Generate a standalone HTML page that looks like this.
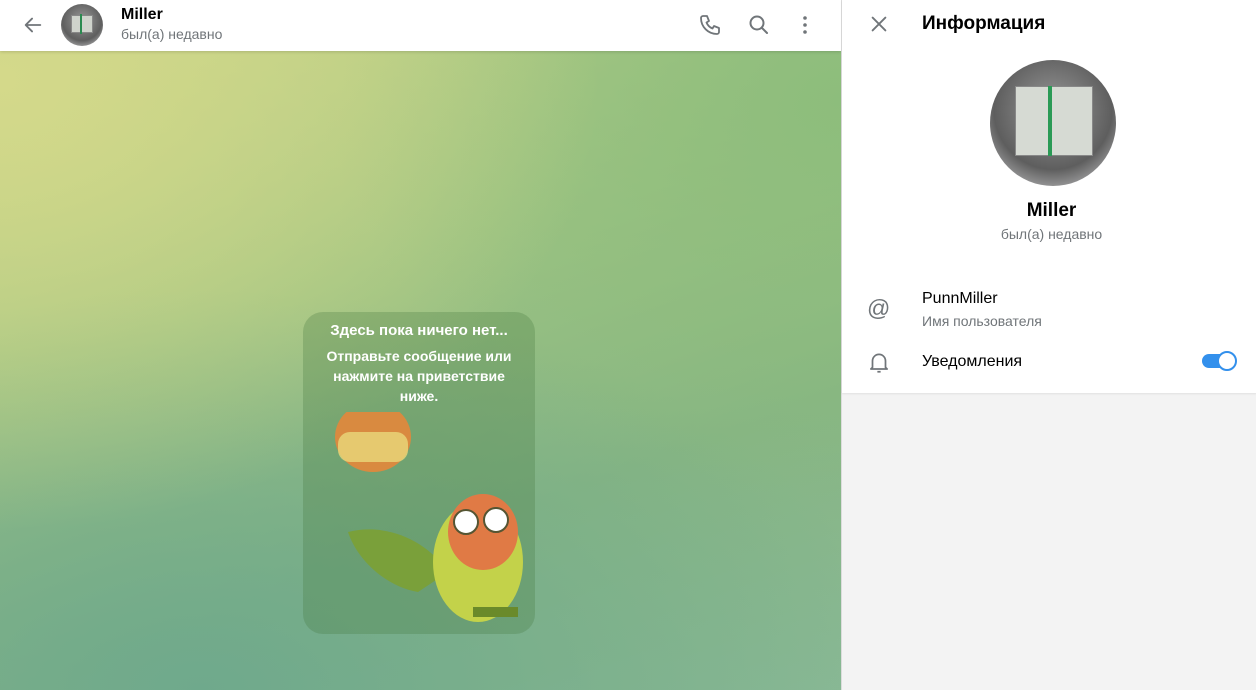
<!DOCTYPE html>
<html><head><meta charset="utf-8"><style>
*{margin:0;padding:0;box-sizing:border-box}
body{width:1256px;height:690px;overflow:hidden;font-family:"Liberation Sans","Noto Sans CJK SC",sans-serif;position:relative;background:#fff}
#chat{position:absolute;left:0;top:0;width:841px;height:690px;overflow:hidden;
background:radial-gradient(ellipse 600px 450px at 0 80px,#d4d98a 0%,rgba(212,217,138,0) 100%),
radial-gradient(ellipse 500px 400px at 841px 100px,#8dbd7c 0%,rgba(141,189,124,0) 100%),
radial-gradient(ellipse 700px 400px at 200px 690px,#6fa98c 0%,rgba(111,169,140,0) 100%),
linear-gradient(160deg,#c9d487 0%,#9fc483 40%,#86b583 70%,#8ab995 100%)}
#hdr{position:absolute;left:0;top:0;width:841px;height:51px;background:#fff;box-shadow:0 1px 3px rgba(0,0,0,.15)}
.av{position:absolute;border-radius:50%;background:radial-gradient(circle at 50% 40%,#9a9a9a,#5e5e5e 60%,#d8d8da);overflow:hidden}
.bill{position:absolute;background:#cfd3cc;border:1px solid #888}
#side{position:absolute;left:841px;top:0;width:415px;height:690px;background:#f3f3f3;border-left:1px solid #dcdcdc}
#sidetop{position:absolute;left:0;top:0;width:415px;height:393px;background:#fff;box-shadow:0 1px 2px rgba(0,0,0,.08)}
.card{position:absolute;left:303px;top:312px;width:232px;height:322px;border-radius:20px;background:rgba(70,120,60,.28);color:#fff;text-align:center;font-size:14px;line-height:20px}
</style></head><body>
<div id="chat">
<div id="hdr">
<svg style="position:absolute;left:22px;top:14px" width="22" height="22" viewBox="0 0 24 24"><path d="M20 12H5M11 5l-7 7 7 7" fill="none" stroke="#707579" stroke-width="2" stroke-linecap="round" stroke-linejoin="round"/></svg>
<div class="av" style="left:61px;top:4px;width:42px;height:42px"><div class="bill" style="left:10px;top:11px;width:22px;height:18px"></div><div style="position:absolute;left:19px;top:10px;width:2px;height:20px;background:#2a8a50"></div></div>
<div style="position:absolute;left:121px;top:6px;font-size:16px;font-weight:bold;color:#000">Miller</div>
<div style="position:absolute;left:121px;top:26px;font-size:14px;color:#707579">был(а) недавно</div>
<svg style="position:absolute;left:698px;top:13px" width="24" height="24" viewBox="0 0 24 24"><path d="M5 3h4l2 5-2.5 1.5a11 11 0 0 0 6 6L16 13l5 2v4a2 2 0 0 1-2 2A16 16 0 0 1 3 5a2 2 0 0 1 2-2z" fill="none" stroke="#707579" stroke-width="1.8" stroke-linejoin="round"/></svg>
<svg style="position:absolute;left:747px;top:13px" width="24" height="24" viewBox="0 0 24 24"><circle cx="10" cy="10" r="6.5" fill="none" stroke="#707579" stroke-width="2"/><path d="M15 15l5 5" stroke="#707579" stroke-width="2" stroke-linecap="round"/></svg>
<svg style="position:absolute;left:793px;top:13px" width="24" height="24" viewBox="0 0 24 24"><circle cx="12" cy="5" r="1.8" fill="#707579"/><circle cx="12" cy="12" r="1.8" fill="#707579"/><circle cx="12" cy="19" r="1.8" fill="#707579"/></svg>
</div>
<div class="card">
<div style="margin-top:9px;font-weight:bold;font-size:15px">Здесь пока ничего нет...</div>
<div style="margin-top:5px;font-weight:bold;font-size:14px">Отправьте сообщение или<br>нажмите на приветствие<br>ниже.</div>
<svg style="position:absolute;left:30px;top:100px" width="190" height="210" viewBox="0 0 190 210">
<ellipse cx="40" cy="25" rx="38" ry="35" fill="#d98a40"/><rect x="5" y="20" width="70" height="30" rx="12" fill="#e8d87a" opacity=".8"/>
<path d="M15 120c40-10 80 10 100 40l-30 20c-30-5-60-30-70-60z" fill="#7aa03a"/>
<ellipse cx="145" cy="150" rx="45" ry="60" fill="#c3d24a"/>
<ellipse cx="150" cy="120" rx="35" ry="38" fill="#e07a45"/>
<circle cx="133" cy="110" r="12" fill="#fff" stroke="#553" stroke-width="2"/><circle cx="163" cy="108" r="12" fill="#fff" stroke="#553" stroke-width="2"/>
<path d="M140 195h45v10h-45z" fill="#6a8a2a"/>
</svg>
</div>
</div>
<div id="side">
<div id="sidetop">
<svg style="position:absolute;left:26px;top:13px" width="22" height="22" viewBox="0 0 24 24"><path d="M5 5l14 14M19 5L5 19" stroke="#707579" stroke-width="2" stroke-linecap="round"/></svg>
<div style="position:absolute;left:80px;top:13px;font-size:19px;font-weight:bold;color:#000">Информация</div>
<div class="av" style="left:148px;top:60px;width:126px;height:126px"><div class="bill" style="left:25px;top:26px;width:78px;height:70px;background:#d6dad3"></div><div style="position:absolute;left:58px;top:26px;width:4px;height:70px;background:#2a9a55"></div></div>
<div style="position:absolute;left:2px;width:415px;top:200px;text-align:center;font-size:19px;font-weight:bold">Miller</div>
<div style="position:absolute;left:2px;width:415px;top:226px;text-align:center;font-size:14px;color:#707579">был(а) недавно</div>
<div style="position:absolute;left:25px;top:295px;font-size:23px;color:#707579">@</div>
<div style="position:absolute;left:80px;top:290px;font-size:16px;color:#000">PunnMiller</div>
<div style="position:absolute;left:80px;top:313px;font-size:14px;color:#707579">Имя пользователя</div>
<svg style="position:absolute;left:24px;top:349px" width="26" height="26" viewBox="0 0 24 24"><path d="M6 17V11a6 6 0 0 1 12 0v6l1.5 1.5h-15z M10.5 21h3" fill="none" stroke="#707579" stroke-width="1.6" stroke-linejoin="round"/></svg>
<div style="position:absolute;left:80px;top:353px;font-size:16px;color:#000">Уведомления</div>
<div style="position:absolute;left:360px;top:354px;width:34px;height:14px;border-radius:7px;background:#3390ec"></div>
<div style="position:absolute;left:375px;top:351px;width:20px;height:20px;border-radius:50%;background:#fff;border:2px solid #3390ec"></div>
</div>
</div>
</body></html>
